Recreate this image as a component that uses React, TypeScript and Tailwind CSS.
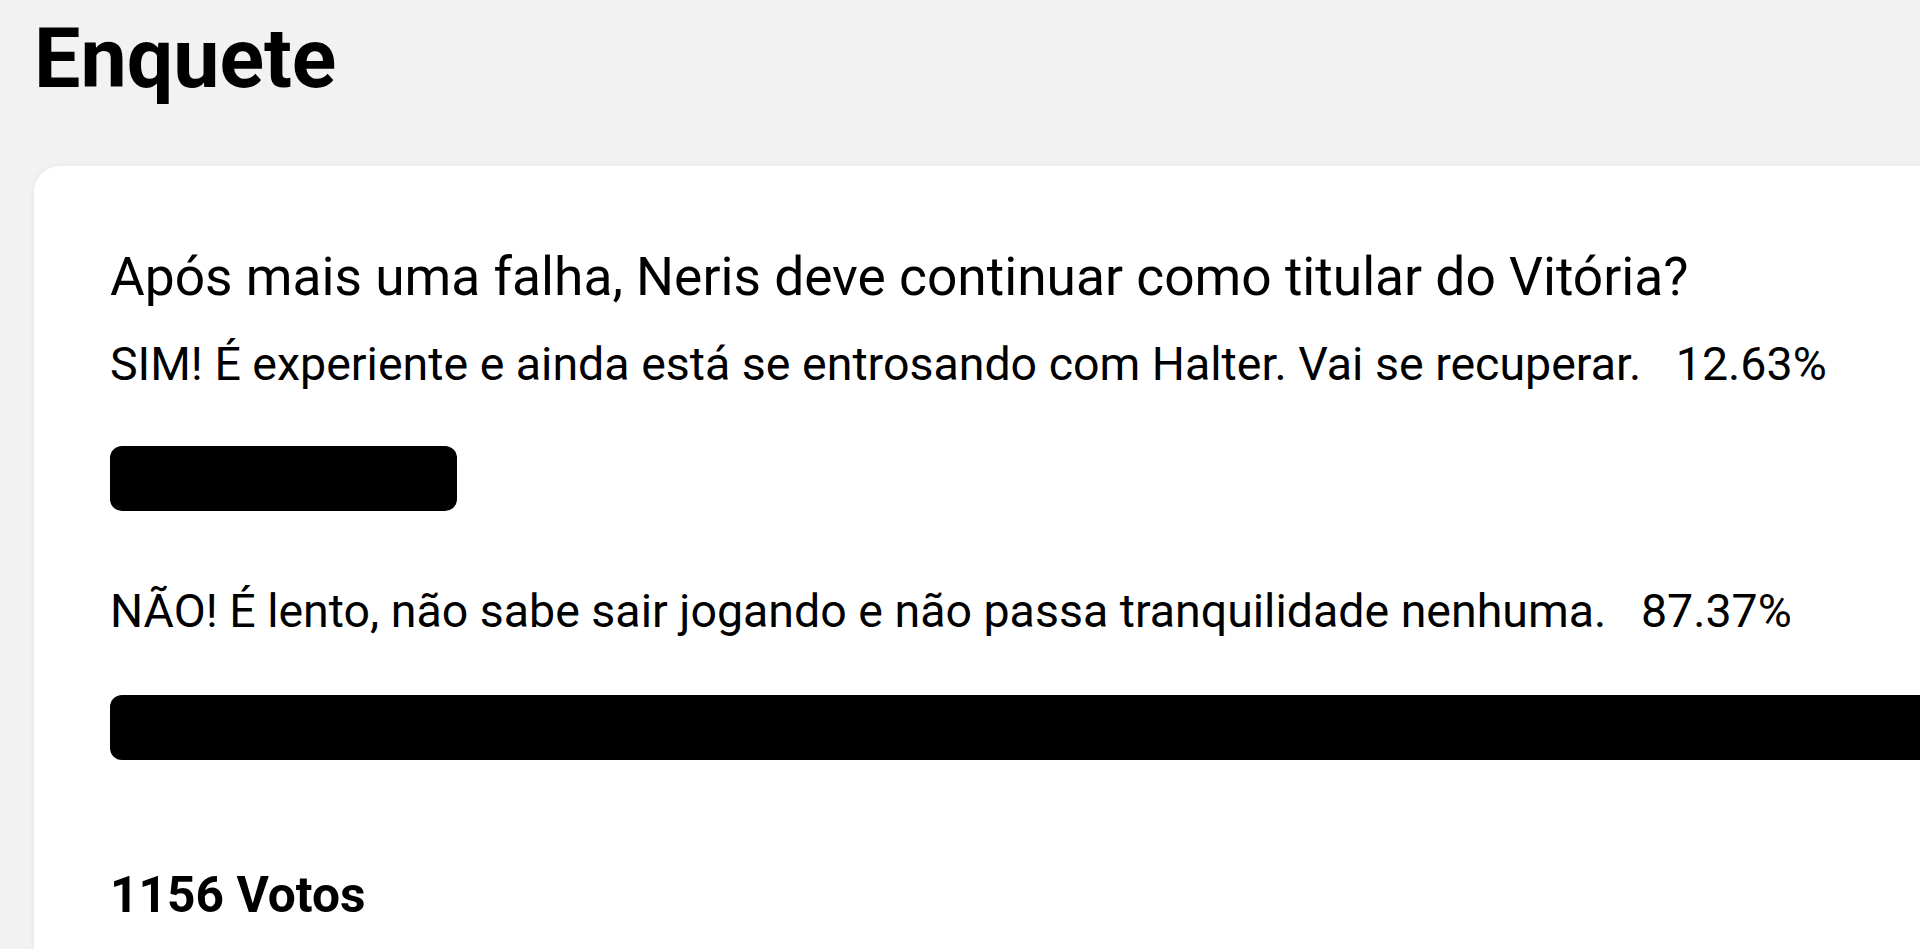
import React from 'react';

interface PollOption {
  label: string;
  percent: number;
}

const options: PollOption[] = [
  { label: 'SIM! É experiente e ainda está se entrosando com Halter. Vai se recuperar.', percent: 12.63 },
  { label: 'NÃO! É lento, não sabe sair jogando e não passa tranquilidade nenhuma.', percent: 87.37 },
];

const App: React.FC = () => {
  return (
    <div
      className="w-screen h-[949px] overflow-hidden bg-[#f2f2f2] text-black px-[34px] pt-[18px]"
      style={{ fontFamily: 'Roboto, "Noto Sans", sans-serif' }}
    >
      <h1 className="text-[82.5px] font-bold leading-none">Enquete</h1>

      <div className="mt-[65px] w-[2899px] bg-white rounded-[26px] shadow-[0_0_6px_rgba(0,0,0,0.06)] pl-[76px] pt-[85px] pb-[60px]">
        <h2 className="text-[53.3px] leading-none">Após mais uma falha, Neris deve continuar como titular do Vitória?</h2>

        <div className="mt-[37px] w-[2747px]">
          {options.map((opt, idx) => (
            <div key={idx} className={idx === 0 ? '' : 'mt-[77px]'}>
              <p className="text-[46.5px] leading-none whitespace-pre">
                {opt.label}   {opt.percent.toFixed(2)}%
              </p>
              <div
                className={`h-[65px] bg-black rounded-[12px] ${idx === 0 ? 'mt-[59px]' : 'mt-[60px]'}`}
                style={{ width: `${opt.percent}%` }}
              />
            </div>
          ))}
        </div>

        <p className="mt-[111px] text-[49.7px] font-bold leading-none">1156 Votos</p>
      </div>
    </div>
  );
};

export default App;
